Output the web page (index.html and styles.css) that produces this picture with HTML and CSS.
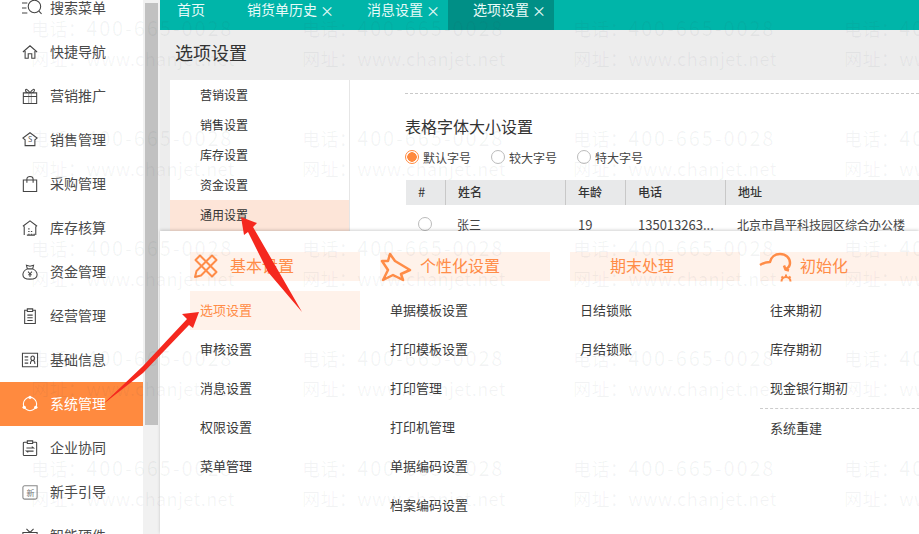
FILE: index.html
```html
<!DOCTYPE html>
<html lang="zh-CN">
<head>
<meta charset="utf-8">
<title>选项设置</title>
<link rel="stylesheet" href="styles.css">
</head>
<body>
<div class="app">
  <nav class="sidebar">
    <a class="nav-item"><svg class="nav-icon" viewBox="0 0 18 18"><path d="M0 3.400h6M0 9h5M0 14.600h6"/><circle cx="14" cy="7.300" r="7"/><path d="M19 12.500l3 3"/></svg>搜索菜单</a>
    <a class="nav-item"><svg class="nav-icon" viewBox="0 0 18 18"><path d="M1 9l8-7 8 7M3.500 8v8h3.500v-5h4v5h3.500V8"/></svg>快捷导航</a>
    <a class="nav-item"><svg class="nav-icon" viewBox="0 0 18 18"><path d="M1.500 5.500h15v12h-15zM1.500 9.500h15M9 5.500C6 5.500 4 4 4 2.500S6 .500 9 5.500C12 .500 14 1 14 2.500S12 5.500 9 5.500"/><path class="nav-soft" d="M7.500 5.500v12M10.500 5.500v12"/></svg>营销推广</a>
    <a class="nav-item"><svg class="nav-icon" viewBox="0 0 18 18"><path d="M9 .800l8 6-2.500 2v6.500h-11V8.800L1 6.800z"/><text class="nav-glyph" x="9" y="11">S</text></svg>销售管理</a>
    <a class="nav-item"><svg class="nav-icon" viewBox="0 0 18 18"><path d="M1.500 4.500h15v13h-15zM5.500 7.500V3.500C5.500 1.500 7 .500 9 .500s3.500 1 3.500 3v4"/></svg>采购管理</a>
    <a class="nav-item"><svg class="nav-icon" viewBox="0 0 18 18"><path d="M1 7l8-6 8 6M2.500 17V7M15.500 17V7M5.500 17h9"/><path d="M7 10h1.500M7 13h1.500M10 13h1.500M7 16h1.500M10 16h1.500M13 16h1.500"/></svg>库存核算</a>
    <a class="nav-item"><svg class="nav-icon" viewBox="0 0 18 18"><path d="M6 5.500L5 1.500l4 1 4-1-1 4M6 5.500h6M6 5.500C3 7 1 9 1 12c0 3 2.500 5 8 5s8-2 8-5c0-3-2-5-5-6.500"/><path d="M6.800 8.500L9 11l2.200-2.500M9 11v3.500M7 12h4"/></svg>资金管理</a>
    <a class="nav-item"><svg class="nav-icon" viewBox="0 0 18 18"><path d="M6 2.500H3v15h12v-15h-3M6 1h6v3H6zM6 8h6M6 11h6M6 14h6"/></svg>经营管理</a>
    <a class="nav-item"><svg class="nav-icon" viewBox="0 0 18 18"><path d="M.500 1.500h17v15H.500zM3 5.500h4M3 9h4M3 12.500h4M9.500 13.500c0-3 1-4 2.500-4s2.500 1 2.500 4M10 7c0-1.500.800-2.500 2-2.500S14 5.500 14 7s-.800 2.500-2 2.500S10 8.500 10 7z"/></svg>基础信息</a>
    <a class="nav-item nav-item-active"><svg class="nav-icon" viewBox="0 0 18 18"><circle cx="9" cy="9" r="7.500"/><circle class="nav-node" cx="9" cy="1.500" r="1.900"/><circle class="nav-node" cx="2.500" cy="12.750" r="1.900"/><circle class="nav-node" cx="15.500" cy="12.750" r="1.900"/></svg>系统管理</a>
    <a class="nav-item"><svg class="nav-icon" viewBox="0 0 18 18"><path d="M6 2.500H2.500a1 1 0 0 0-1 1v13a1 1 0 0 0 1 1h13a1 1 0 0 0 1-1v-13a1 1 0 0 0-1-1H12M6 1h6v3H6zM5 9h8l-2-1.500M13 12.500H5l2 1.500"/></svg>企业协同</a>
    <a class="nav-item"><svg class="nav-icon nav-icon-grey" viewBox="0 0 18 18"><path d="M3 2h14v13a2 2 0 0 1-2 2H3a2 2 0 0 1-2-2V4a2 2 0 0 1 2-2z"/><text class="nav-glyph" x="9.500" y="13">新</text></svg>新手引导</a>
    <a class="nav-item"><svg class="nav-icon" viewBox="0 0 18 18"><path d="M1 5h16v12H1zM5 1l4 4 4-4"/></svg>智能硬件</a>
  </nav>
  <div class="scrollbar"><div class="scroll-thumb"></div></div>
  <main class="main">
    <div class="tabs">
      <a class="tab tab-home">首页</a>
      <a class="tab tab-long">销货单历史<span class="tab-close">×</span></a>
      <a class="tab">消息设置<span class="tab-close">×</span></a>
      <a class="tab tab-active">选项设置<span class="tab-close">×</span></a>
    </div>
    <div class="page-body">
      <h1 class="page-title">选项设置</h1>
      <div class="settings">
        <ul class="side-menu">
          <li class="side-item">营销设置</li>
          <li class="side-item">销售设置</li>
          <li class="side-item">库存设置</li>
          <li class="side-item">资金设置</li>
          <li class="side-item side-item-active">通用设置</li>
        </ul>
        <section class="panel">
          <div class="dash"></div>
          <h2 class="panel-title">表格字体大小设置</h2>
          <div class="radios">
            <label class="radio"><span class="dot dot-on"></span>默认字号</label>
            <label class="radio"><span class="dot"></span>较大字号</label>
            <label class="radio"><span class="dot"></span>特大字号</label>
          </div>
          <div class="table">
            <div class="t-row t-head">
              <span class="c c-idx">#</span><span class="c c-name">姓名</span><span class="c c-age">年龄</span><span class="c c-tel">电话</span><span class="c c-addr">地址</span>
            </div>
            <div class="t-row">
              <span class="c c-idx"><span class="dot"></span></span><span class="c c-name">张三</span><span class="c c-age c-num">19</span><span class="c c-tel c-num">135013263...</span><span class="c c-addr">北京市昌平科技园区综合办公楼</span>
            </div>
          </div>
        </section>
      </div>
    </div>
  </main>

  <div class="mega">
    <div class="mega-col">
      <div class="mega-head"><svg class="mega-icon" viewBox="0 0 24 24"><path d="M6 1.500L22.500 18 18 22.500 1.500 6z"/><path d="M18 1.500L22.500 6 7 21.500 1 23 2.500 17z"/></svg>基本设置</div>
      <a class="mega-item mega-item-active">选项设置</a>
      <a class="mega-item">审核设置</a>
      <a class="mega-item">消息设置</a>
      <a class="mega-item">权限设置</a>
      <a class="mega-item">菜单管理</a>
    </div>
    <div class="mega-col">
      <div class="mega-head"><svg class="mega-icon mega-icon-wide" viewBox="0 0 30 28"><path d="M10 2l5 7 15 9-9 4 2 6-10-5-10 5 5-10-6-9 6 0z"/></svg>个性化设置</div>
      <a class="mega-item">单据模板设置</a>
      <a class="mega-item">打印模板设置</a>
      <a class="mega-item">打印管理</a>
      <a class="mega-item">打印机管理</a>
      <a class="mega-item">单据编码设置</a>
      <a class="mega-item">档案编码设置</a>
    </div>
    <div class="mega-col">
      <div class="mega-head">期末处理</div>
      <a class="mega-item">日结锁账</a>
      <a class="mega-item">月结锁账</a>
    </div>
    <div class="mega-col">
      <div class="mega-head"><svg class="mega-icon mega-icon-wide" viewBox="0 0 30 28"><path d="M0 13c3-2 7-3 10-3C11 5 15 2 20 2c6 0 10 4 10 9 0 3-2 5-4 6M24 13.500l1.500 4 3.500 1"/><path class="mega-gear" d="M21.500 29.500a4.500 4.500 0 0 1 9 0M26 22.500v2.500M21.500 24.500l1.800 1.800M30.500 24.500l-1.800 1.800"/></svg>初始化</div>
      <a class="mega-item">往来期初</a>
      <a class="mega-item">库存期初</a>
      <a class="mega-item mega-item-sep">现金银行期初</a>
      <a class="mega-item">系统重建</a>
    </div>
  </div>

  <div class="watermarks" aria-hidden="true">
    <div class="wm"><span>电话：<span class="wm-num">400-665-0028</span></span><span>网址：www.chanjet.net</span></div>
    <div class="wm"><span>电话：<span class="wm-num">400-665-0028</span></span><span>网址：www.chanjet.net</span></div>
    <div class="wm"><span>电话：<span class="wm-num">400-665-0028</span></span><span>网址：www.chanjet.net</span></div>
    <div class="wm"><span>电话：<span class="wm-num">400-665-0028</span></span><span>网址：www.chanjet.net</span></div>
    <div class="wm"><span>电话：<span class="wm-num">400-665-0028</span></span><span>网址：www.chanjet.net</span></div>
    <div class="wm"><span>电话：<span class="wm-num">400-665-0028</span></span><span>网址：www.chanjet.net</span></div>
    <div class="wm"><span>电话：<span class="wm-num">400-665-0028</span></span><span>网址：www.chanjet.net</span></div>
    <div class="wm"><span>电话：<span class="wm-num">400-665-0028</span></span><span>网址：www.chanjet.net</span></div>
    <div class="wm"><span>电话：<span class="wm-num">400-665-0028</span></span><span>网址：www.chanjet.net</span></div>
    <div class="wm"><span>电话：<span class="wm-num">400-665-0028</span></span><span>网址：www.chanjet.net</span></div>
    <div class="wm"><span>电话：<span class="wm-num">400-665-0028</span></span><span>网址：www.chanjet.net</span></div>
    <div class="wm"><span>电话：<span class="wm-num">400-665-0028</span></span><span>网址：www.chanjet.net</span></div>
    <div class="wm"><span>电话：<span class="wm-num">400-665-0028</span></span><span>网址：www.chanjet.net</span></div>
    <div class="wm"><span>电话：<span class="wm-num">400-665-0028</span></span><span>网址：www.chanjet.net</span></div>
    <div class="wm"><span>电话：<span class="wm-num">400-665-0028</span></span><span>网址：www.chanjet.net</span></div>
    <div class="wm"><span>电话：<span class="wm-num">400-665-0028</span></span><span>网址：www.chanjet.net</span></div>
    <div class="wm"><span>电话：<span class="wm-num">400-665-0028</span></span><span>网址：www.chanjet.net</span></div>
    <div class="wm"><span>电话：<span class="wm-num">400-665-0028</span></span><span>网址：www.chanjet.net</span></div>
    <div class="wm"><span>电话：<span class="wm-num">400-665-0028</span></span><span>网址：www.chanjet.net</span></div>
    <div class="wm"><span>电话：<span class="wm-num">400-665-0028</span></span><span>网址：www.chanjet.net</span></div>
  </div>

  <svg class="arrows" viewBox="0 0 919 534" aria-hidden="true">
    <path d="M102 405L143 366 187 319 182 314 199 312 193 328 189 325 143 373z"/>
    <path d="M241 217L257 223 253 227 279 272 302 312 268 272 248 232 244 235z"/>
  </svg>
</div>
</body>
</html>
```

FILE: styles.css
```css
* { box-sizing: border-box; }

html, body {
  margin: 0;
  height: 100%;
  overflow: hidden;
  background: #fff;
}

body {
  font-family: "Noto Sans CJK SC", "Noto Sans", sans-serif;
  color: #333;
}

.app {
  position: relative;
  display: flex;
  width: 919px;
  height: 534px;
  overflow: hidden;
}

/* sidebar */
.sidebar {
  flex: 0 0 143px;
  margin-top: -14px;
  background: #fff;
}

.nav-item {
  display: flex;
  align-items: center;
  gap: 12px;
  height: 44px;
  padding: 0 0 2px 22px;
  font-size: 14px;
  color: #4a4a4a;
}

.nav-icon {
  flex: none;
  width: 16px;
  height: 16px;
  margin-top: 2px;
  fill: none;
  stroke: #444;
  stroke-width: 1.2;
  overflow: visible;
}

.nav-icon-grey { stroke: #888; }
.nav-soft { opacity: 0.45; }

.nav-glyph {
  font-size: 8px;
  fill: #555;
  stroke: none;
  text-anchor: middle;
}

.nav-icon-grey .nav-glyph { font-size: 9px; fill: #777; }

.nav-item-active {
  background: #ff8a3f;
  color: #fff;
}

.nav-item-active .nav-icon { stroke: #fff; }
.nav-node { fill: #fff; stroke: none; }

.scrollbar {
  flex: 0 0 17px;
  padding: 3px 2px 0;
  background: #f1f1f1;
}

.scroll-thumb {
  width: 13px;
  height: 422px;
  background: #c1c1c1;
}

/* main */
.main {
  flex: 1;
  min-width: 0;
  background: #ededed;
}

.tabs {
  display: flex;
  height: 30px;
  background: #00b5a9;
}

.tab {
  display: flex;
  align-items: flex-start;
  width: 106px;
  padding: 0 0 0 25px;
  font-size: 14px;
  line-height: 18px;
  color: #e8fbf9;
  white-space: nowrap;
}

.tab-long { width: 120px; }
.tab-home { width: 62px; padding: 0 17px; }
.tab-active { background: #008f86; }

.tab-close {
  margin-left: 3px;
  font-size: 14px;
  line-height: 20px;
}

.page-body { padding-left: 10px; }

.page-title {
  margin: 0;
  padding-left: 5px;
  height: 50px;
  line-height: 45px;
  font-size: 18px;
  font-weight: 400;
  color: #333;
}

.settings {
  display: flex;
  height: 300px;
  background: #fff;
}

.side-menu {
  flex: 0 0 180px;
  margin: 0;
  padding: 0;
  list-style: none;
  border-right: 1px solid #e6e6e6;
}

.side-item {
  height: 30px;
  line-height: 30px;
  padding-left: 30px;
  font-size: 12px;
  color: #333;
}

.side-item-active {
  height: 31px;
  background: #fde5d8;
}

.panel { flex: 1; min-width: 0; padding-left: 55px; }

.dash {
  margin-top: 13px;
  border-top: 1px dashed #c9c9c9;
}

.panel-title {
  margin: 20px 0 0;
  height: 24px;
  line-height: 24px;
  font-size: 16px;
  font-weight: 400;
  color: #333;
}

.radios {
  display: flex;
  gap: 20px;
  margin-top: 7px;
  height: 24px;
  align-items: center;
}

.radio {
  display: flex;
  align-items: center;
  gap: 4px;
  font-size: 12px;
  color: #444;
}

.dot {
  display: block;
  width: 14px;
  height: 14px;
  border: 1px solid #bbb;
  border-radius: 50%;
  background: #fff;
}

.dot-on {
  border-color: #ff8a3f;
  background: radial-gradient(circle, #ff8a3f 0 4.500px, #fff 5px);
}

.table {
  margin: 11px 0 0 1px;
  font-size: 12px;
}

.t-row {
  display: flex;
  height: 40px;
  padding-bottom: 2px;
  align-items: center;
  color: #444;
}

.t-head {
  height: 25px;
  padding-bottom: 0;
  background: #e8e9ea;
  color: #333;
  font-weight: 500;
}

.t-head .c { padding-bottom: 2px; }
.t-head .c + .c { border-left: 1px solid #c8c8c8; }

.c {
  display: flex;
  align-items: center;
  flex: none;
  height: 100%;
  padding-left: 12px;
  white-space: nowrap;
}

.t-head .c-idx { font-size: 13px; font-weight: 400; }
.c-num { font-size: 13px; padding-left: 13px; }
.c-idx { width: 39px; }
.c-name { width: 120px; }
.c-age { width: 60px; }
.c-tel { width: 100px; }
.c-addr { width: 200px; }

/* mega menu */
.mega {
  position: absolute;
  left: 160px;
  top: 231px;
  right: 0;
  bottom: 0;
  display: flex;
  gap: 20px;
  padding: 21px 0 0 30px;
  background: #fff;
  box-shadow: 0 -1px 3px rgba(0, 0, 0, 0.18);
  overflow: hidden;
}

.mega-col {
  flex: 0 0 170px;
  display: flex;
  flex-direction: column;
}

.mega-col:last-child { flex-basis: 180px; }

.mega-head {
  position: relative;
  display: flex;
  align-items: center;
  height: 29px;
  margin-bottom: 10px;
  padding: 0 0 4px 40px;
  background: #fff2ea;
  font-size: 16px;
  color: #ff8c47;
}

.mega-icon {
  position: absolute;
  left: 4px;
  top: 2px;
  width: 24px;
  height: 24px;
  fill: none;
  stroke: #ff8c47;
  stroke-width: 2;
  stroke-linejoin: round;
  overflow: visible;
}

.mega-icon-wide {
  left: 0;
  top: 0;
  width: 30px;
  height: 28px;
  stroke-width: 2.500;
}

.mega-gear { stroke-width: 2; }

.mega-item {
  display: block;
  height: 39px;
  line-height: 38px;
  padding-left: 10px;
  font-size: 13px;
  color: #3a3a3a;
}

.mega-item-active {
  background: #fff2ea;
  color: #ff8c47;
}

.mega-item-sep {
  height: 40px;
  border-bottom: 1px dashed #ccc;
}

/* watermark */
.watermarks {
  position: absolute;
  inset: 0;
  display: grid;
  grid-template-columns: repeat(4, 271px);
  grid-auto-rows: 110px;
  padding: 15px 0 0 31px;
  pointer-events: none;
  overflow: hidden;
}

.wm {
  display: flex;
  flex-direction: column;
  gap: 4px;
  font-size: 18px;
  line-height: 26px;
  letter-spacing: 0.4px;
  color: rgba(60, 70, 80, 0.06);
  white-space: nowrap;
}

.wm-num {
  font-size: 20px;
  letter-spacing: 1.850px;
}

.arrows {
  position: absolute;
  inset: 0;
  width: 919px;
  height: 534px;
  fill: #f5281e;
  pointer-events: none;
}
```
